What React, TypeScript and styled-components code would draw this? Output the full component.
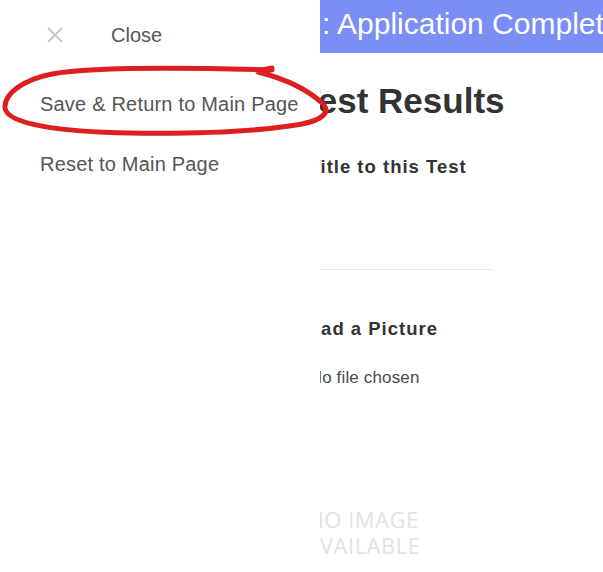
import React from "react";
import styled, { createGlobalStyle } from "styled-components";

const Global = createGlobalStyle`
  html, body { margin: 0; padding: 0; background: #fff; overflow: hidden; }
  body { font-family: "Liberation Sans", Arial, sans-serif; }
  * { box-sizing: border-box; }
`;

const Page = styled.div`
  position: relative;
  width: 603px;
  height: 572px;
  overflow: hidden;
`;

const Banner = styled.header`
  height: 53px;
  margin-left: 320px;
  background: #7a8ef6;
  color: #fff;
  font-size: 30px;
  line-height: 53px;
  white-space: nowrap;
  overflow: hidden;
  padding-left: 2px;
  & span { position: relative; top: -3px; }
`;

const Content = styled.main`
  display: flex;
  flex-direction: column;
  align-items: flex-start;
`;

const Heading = styled.h1<{ $left: number }>`
  margin: 27px 0 0 ${(p) => p.$left}px;
  font-size: 35px;
  line-height: 42px;
  font-weight: 700;
  color: #333;
  white-space: nowrap;
`;

const Label = styled.h3<{ $left: number; $top: number }>`
  margin: ${(p) => p.$top}px 0 0 ${(p) => p.$left}px;
  font-size: 18.5px;
  line-height: 22px;
  font-weight: 700;
  letter-spacing: 1px;
  color: #333;
  white-space: nowrap;
`;

const Divider = styled.hr`
  margin: 91px 0 0 240px;
  width: 254px;
  border: 0;
  border-top: 1px solid #e6e6e6;
  height: 0;
`;

const FileRow = styled.div<{ $left: number }>`
  margin: 28px 0 0 ${(p) => p.$left}px;
  display: flex;
  align-items: center;
  gap: 6px;
  font-size: 17px;
  line-height: 20px;
  letter-spacing: 0.15px;
  color: #4a4a4a;
  white-space: nowrap;
`;

const FileButton = styled.span`
  font-size: 14px;
  letter-spacing: 0;
  color: #333;
`;

const Placeholder = styled.div<{ $left: number }>`
  margin: 118px 0 0 ${(p) => p.$left}px;
  width: 200px;
  text-align: center;
  font-family: "Open Sans", "DejaVu Sans", sans-serif;
  font-size: 22px;
  line-height: 26px;
  color: #e2e2e2;
  letter-spacing: 0.5px;
`;

const Sidebar = styled.nav`
  position: absolute;
  top: 0;
  left: 0;
  width: 320px;
  height: 100%;
  background: #fff;
  z-index: 5;
  display: flex;
  flex-direction: column;
  color: #555;
  font-size: 20px;
`;

const CloseRow = styled.div`
  display: flex;
  align-items: center;
  height: 40px;
  margin-top: 15px;
  padding-left: 47px;
`;

const CloseIcon = styled.svg`
  width: 16px;
  height: 16px;
  margin-right: 48px;
`;

const NavLink = styled.a<{ $top: number }>`
  display: block;
  margin-top: ${(p) => p.$top}px;
  padding-left: 40px;
  line-height: 24px;
  letter-spacing: 0.2px;
  color: #555;
  text-decoration: none;
  white-space: nowrap;
`;

const Annotation = styled.svg`
  position: absolute;
  left: 0;
  top: 0;
  width: 603px;
  height: 572px;
  z-index: 10;
  pointer-events: none;
`;

export default function App() {
  return (
    <>
      <Global />
      <Page>
        <Banner>
          <span>: Application Complete</span>
        </Banner>
        <Content>
          <Heading $left={299}>Test Results</Heading>
          <Label $left={246} $top={34}>Add a Title to this Test</Label>
          <Divider />
          <Label $left={276} $top={48}>Upload a Picture</Label>
          <FileRow $left={229}>
            <FileButton>Choose File</FileButton>
            <span>No file chosen</span>
          </FileRow>
          <Placeholder $left={263}>
            NO IMAGE
            <br />
            AVAILABLE
          </Placeholder>
        </Content>
        <Sidebar>
          <CloseRow>
            <CloseIcon viewBox="0 0 16 16">
              <path d="M1 1 L15 15 M15 1 L1 15" stroke="#c8c8c8" strokeWidth="1.8" fill="none" />
            </CloseIcon>
            <span>Close</span>
          </CloseRow>
          <NavLink href="#" $top={37}>Save &amp; Return to Main Page</NavLink>
          <NavLink href="#" $top={36}>Reset to Main Page</NavLink>
        </Sidebar>
        <Annotation viewBox="0 0 603 572">
          <path
            d="M272 70 C 200 68, 95 66, 52 74 C 22 80, 4 94, 5 108 C 7 124, 60 132, 130 133 C 200 134, 262 131, 302 124 C 322 120, 332 112, 322 103 C 308 90, 286 79, 258 72"
            stroke="#de1f1f"
            strokeWidth="5"
            fill="none"
            strokeLinecap="round"
          />
          <path d="M262 70 L 272 68" stroke="#de1f1f" strokeWidth="5" strokeLinecap="round" />
        </Annotation>
      </Page>
    </>
  );
}
